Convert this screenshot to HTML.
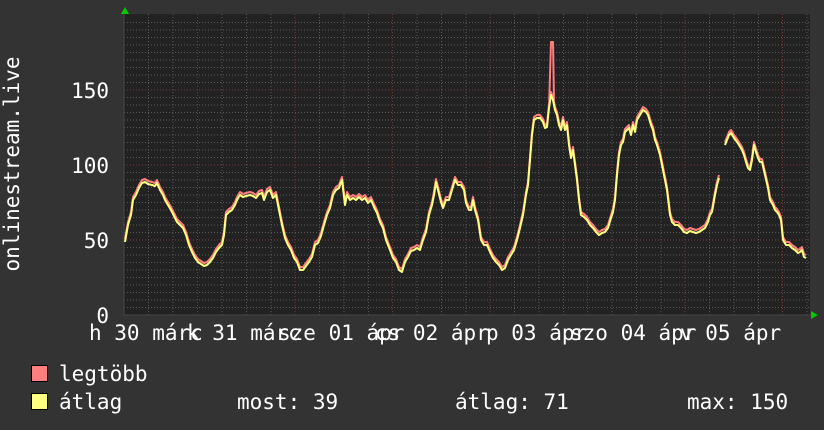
<!DOCTYPE html>
<html><head><meta charset="utf-8"><style>
html,body{margin:0;padding:0;background:#333;}
svg{display:block}
text{font-family:"DejaVu Sans Mono","Liberation Mono",monospace;font-size:21px;fill:#fff}
</style></head><body>
<svg width="824" height="430" viewBox="0 0 824 430" xmlns="http://www.w3.org/2000/svg">
<rect width="824" height="430" fill="#333"/>
<rect x="124" y="14" width="686" height="301" fill="#222"/>
<g stroke="#5a5a5a" stroke-width="1" stroke-dasharray="1,2" shape-rendering="crispEdges">
<path d="M124 22.5H810M124 30H810M124 37.5H810M124 45H810M124 52.5H810M124 60H810M124 67.5H810M124 75H810M124 82.5H810M124 97.5H810M124 105H810M124 112.5H810M124 120H810M124 127.5H810M124 135H810M124 142.5H810M124 150H810M124 157.5H810M124 172.5H810M124 180H810M124 187.5H810M124 195H810M124 202.5H810M124 210H810M124 217.5H810M124 225H810M124 232.5H810M124 247.5H810M124 255H810M124 262.5H810M124 270H810M124 277.5H810M124 285H810M124 292.5H810M124 300H810M124 307.5H810"/>
<path d="M148.5 14V315M173 14V315M222 14V315M246.5 14V315M271 14V315M319.5 14V315M344 14V315M368.5 14V315M417 14V315M441.5 14V315M466 14V315M514.5 14V315M539 14V315M563.5 14V315M612 14V315M636.5 14V315M661 14V315M709.5 14V315M734 14V315M758.5 14V315M807 14V315"/>
</g>
<g stroke="#7a3a3a" stroke-width="1" stroke-dasharray="1,2" shape-rendering="crispEdges">
<path d="M124 90H810M124 165H810M124 240H810"/>
<path d="M197.5 14V315M295 14V315M392.5 14V315M490 14V315M587.5 14V315M685 14V315M782.5 14V315"/>
</g>
<path d="M124 14V315H810" stroke="#444" fill="none"/>
<polygon points="121,14 125,7 129,14" fill="#0c0"/>
<polygon points="811,311 818,315 811,319" fill="#0c0"/>
<g fill="none" stroke-width="2" stroke-linejoin="round">
<g id="d" transform="translate(0,-3)" stroke="#ff7f7f">
<polyline points="125,242 128,225 131,215 133,200 136,195 139,188 142,183 145,182 148,184 152,185 155,186 157,183 160,190 163,195 165,200 168,205 171,210 174,216 177,222 180,225 183,228 186,235 189,245 192,252 195,258 198,262 201,264 204,266 207,265 210,262 213,258 216,252 219,248 222,245 224,235 226,215 229,212 232,210 235,205 237,200 240,195 243,197 246,196 250,195 253,196 256,198 259,194 262,193 264,200 267,192 270,190 273,198 276,195 279,210 282,225 285,238 288,245 291,250 294,258 297,262 300,270 303,270 306,266 309,262 312,257 315,245 318,243 321,236 324,225 327,215 330,208 333,195 336,190 339,188 342,180 345,205 347,195 350,200 353,198 356,200 359,197 362,200 365,198 368,203 371,200 374,207 377,213 380,222 383,228 386,240 390,250 393,258 396,262 399,270 402,272 405,262 408,257 411,251 414,250 417,248 420,250 423,240 426,232 429,215 432,205 434,195 436,182 438,190 441,202 443,208 446,200 449,200 452,190 455,180 458,185 461,185 464,190 466,203 469,210 471,210 473,200 475,210 478,220 481,240 484,245 487,245 490,252 493,258 496,262 499,265 502,270 505,268 508,260 511,255 514,250 517,240 520,228 523,215 526,195 528,185 530,160 532,135 534,120 537,118 540,118 543,122 545,128 547,127 549,108 551,95 553,100 555,110 557,115 559,125 561,130 563,120 565,130 567,125 569,145 571,158 573,150 575,165 577,180 579,200 581,215 584,217 587,220 590,225 593,228 596,232 599,235 602,233 605,232 608,228 611,218 613,212 615,200 617,175 619,155 621,145 623,142 625,132 627,130 629,128 631,135 633,125 635,132 637,120 640,115 643,110 646,112 648,115 651,125 653,130 655,140 657,145 660,155 662,165 664,175 667,190 670,215 672,222 675,225 678,225 681,228 684,232 687,233 690,231 693,232 696,233 699,232 702,230 705,228 708,222 710,215 712,212 715,195 717,185 719,178"/>
<polyline points="725,145 727,140 729,135 731,133 734,138 737,142 739,145 742,150 744,155 746,162 748,168 750,170 752,160 754,145 756,152 758,158 760,162 762,162 765,175 768,188 770,200 773,205 775,210 777,212 779,215 781,220 783,240 786,245 789,245 792,248 795,250 798,253 800,252 802,250 804,257 806,258"/>
</g>
<polyline points="549,108 551,42 553,42 554,100" stroke="#ff7f7f"/>
<g stroke="#ffff80">
<polyline points="125,242 128,225 131,215 133,200 136,195 139,188 142,183 145,182 148,184 152,185 155,186 157,183 160,190 163,195 165,200 168,205 171,210 174,216 177,222 180,225 183,228 186,235 189,245 192,252 195,258 198,262 201,264 204,266 207,265 210,262 213,258 216,252 219,248 222,245 224,235 226,215 229,212 232,210 235,205 237,200 240,195 243,197 246,196 250,195 253,196 256,198 259,194 262,193 264,200 267,192 270,190 273,198 276,195 279,210 282,225 285,238 288,245 291,250 294,258 297,262 300,270 303,270 306,266 309,262 312,257 315,245 318,243 321,236 324,225 327,215 330,208 333,195 336,190 339,188 342,180 345,205 347,195 350,200 353,198 356,200 359,197 362,200 365,198 368,203 371,200 374,207 377,213 380,222 383,228 386,240 390,250 393,258 396,262 399,270 402,272 405,262 408,257 411,251 414,250 417,248 420,250 423,240 426,232 429,215 432,205 434,195 436,182 438,190 441,202 443,208 446,200 449,200 452,190 455,180 458,185 461,185 464,190 466,203 469,210 471,210 473,200 475,210 478,220 481,240 484,245 487,245 490,252 493,258 496,262 499,265 502,270 505,268 508,260 511,255 514,250 517,240 520,228 523,215 526,195 528,185 530,160 532,135 534,120 537,118 540,118 543,122 545,128 547,127 549,108 551,95 553,100 555,110 557,115 559,125 561,130 563,120 565,130 567,125 569,145 571,158 573,150 575,165 577,180 579,200 581,215 584,217 587,220 590,225 593,228 596,232 599,235 602,233 605,232 608,228 611,218 613,212 615,200 617,175 619,155 621,145 623,142 625,132 627,130 629,128 631,135 633,125 635,132 637,120 640,115 643,110 646,112 648,115 651,125 653,130 655,140 657,145 660,155 662,165 664,175 667,190 670,215 672,222 675,225 678,225 681,228 684,232 687,233 690,231 693,232 696,233 699,232 702,230 705,228 708,222 710,215 712,212 715,195 717,185 719,178"/>
<polyline points="725,145 727,140 729,135 731,133 734,138 737,142 739,145 742,150 744,155 746,162 748,168 750,170 752,160 754,145 756,152 758,158 760,162 762,162 765,175 768,188 770,200 773,205 775,210 777,212 779,215 781,220 783,240 786,245 789,245 792,248 795,250 798,253 800,252 802,250 804,257 806,258"/>
</g>
</g>
<g text-anchor="end">
<text x="109" y="98">150</text>
<text x="109" y="173">100</text>
<text x="109" y="248">50</text>
<text x="109" y="323">0</text>
</g>
<text x="89" y="340">h 30 márc</text>
<text x="187" y="340">k 31 márc</text>
<text x="278" y="340">sze 01 ápr</text>
<text x="375" y="340">cs 02 ápr</text>
<text x="486" y="340">p 03 ápr</text>
<text x="570" y="340">szo 04 ápr</text>
<text x="680" y="340">v 05 ápr</text>
<text transform="translate(19,164) rotate(-90)" text-anchor="middle">onlinestream.live</text>
<rect x="31.5" y="365.5" width="16" height="16" fill="#ff7f7f" stroke="#000"/>
<rect x="31.5" y="393.5" width="16" height="16" fill="#ffff80" stroke="#000"/>
<text x="59" y="381">legtöbb</text>
<text x="59" y="409">átlag</text>
<text x="237" y="409">most: 39</text>
<text x="455" y="409">átlag: 71</text>
<text x="687" y="409">max: 150</text>
</svg>
</body></html>
